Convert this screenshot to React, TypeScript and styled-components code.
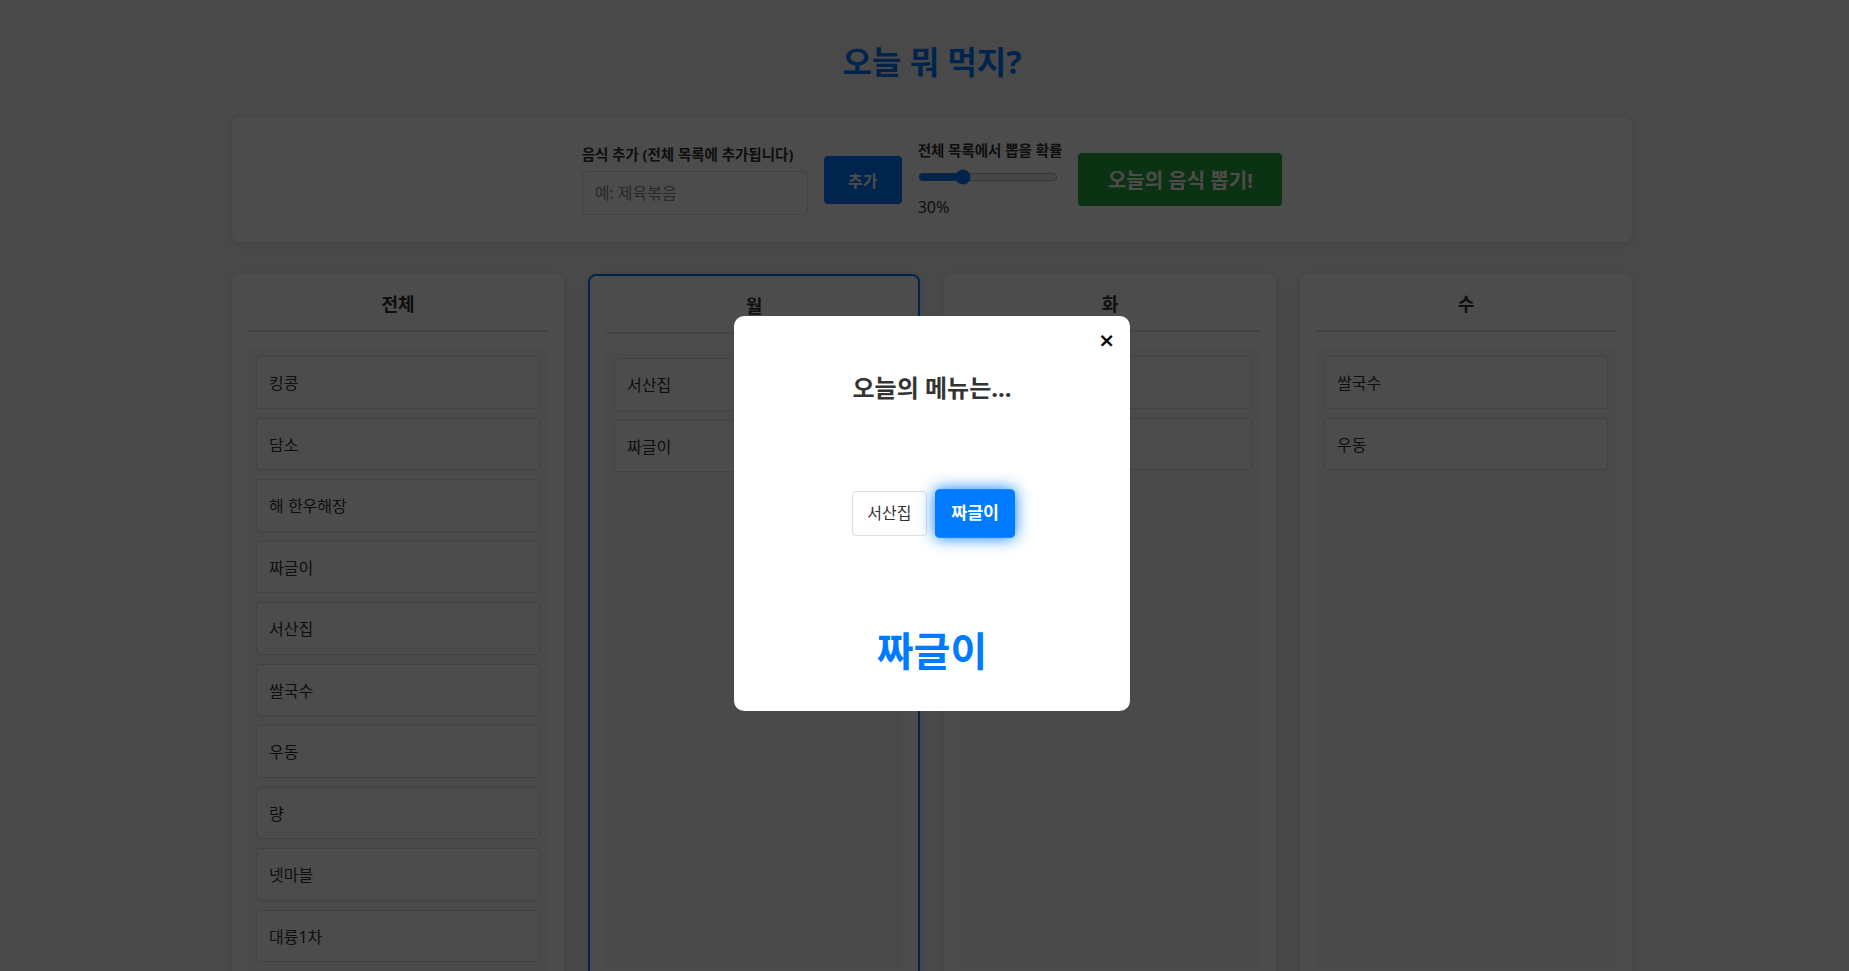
import React from "react";
import styled, { createGlobalStyle } from "styled-components";

type DayColumn = {
  title: string;
  foods: string[];
  active?: boolean;
};

const GlobalStyle = createGlobalStyle`
  * {
    box-sizing: border-box;
  }
  body {
    margin: 0;
    background: #f4f4f4;
    color: #333;
    font-family: "Noto Sans", "Noto Sans CJK KR", sans-serif;
  }
`;

const Page = styled.div`
  position: relative;
  min-height: 100vh;
  padding: 0 0 32px 15px;
`;

const PageTitle = styled.h1`
  margin: 0;
  padding: 38px 0 31px;
  text-align: center;
  font-size: 32px;
  line-height: 48px;
  font-weight: 700;
  color: #007bff;
`;

const Container = styled.main`
  max-width: 1400px;
  margin: 0 auto;
`;

// 상단 입력 영역
const ControlPanel = styled.section`
  display: flex;
  align-items: center;
  justify-content: center;
  gap: 16px;
  padding: 23px 24px;
  background: #fff;
  border-radius: 8px;
  box-shadow: 0 2px 10px rgba(0, 0, 0, 0.1);
`;

const Field = styled.div`
  display: flex;
  flex-direction: column;
`;

const FieldLabel = styled.label`
  font-size: 14.5px;
  line-height: 21px;
  font-weight: 700;
  color: #333;
  margin-bottom: 6px;
`;

const TextInput = styled.input`
  width: 226px;
  height: 44px;
  padding: 10px 12px;
  border: 1px solid #ddd;
  border-radius: 4px;
  font-family: inherit;
  font-size: 16px;
  color: #333;

  &::placeholder {
    color: #888;
  }
`;

const AddButton = styled.button`
  width: 78px;
  height: 48px;
  border: none;
  border-radius: 4px;
  background: #007bff;
  color: #fff;
  font-family: inherit;
  font-size: 16px;
  font-weight: 700;
`;

const RangeInput = styled.input`
  width: 140px;
  margin: 2px 0;
  accent-color: #007bff;
`;

const RangeValue = styled.span`
  margin-top: 8px;
  font-size: 16px;
  line-height: 24px;
  color: #333;
`;

const DrawButton = styled.button`
  width: 204px;
  height: 53px;
  border: none;
  border-radius: 4px;
  background: #28a745;
  color: #fff;
  font-family: inherit;
  font-size: 20px;
  font-weight: 700;
`;

// 요일별 목록
const Board = styled.section`
  display: grid;
  grid-template-columns: repeat(4, 1fr);
  gap: 24px;
  margin-top: 32px;
`;

const Column = styled.div<{ $active?: boolean }>`
  padding: 16px;
  background: #fff;
  border-radius: 8px;
  border: ${({ $active }) => ($active ? "2px solid #007bff" : "none")};
  box-shadow: 0 2px 10px rgba(0, 0, 0, 0.1);
`;

const ColumnTitle = styled.h3`
  margin: 0;
  padding-bottom: 12px;
  border-bottom: 2px solid #e2e2e2;
  text-align: center;
  font-size: 18px;
  line-height: 28px;
  font-weight: 700;
  color: #333;
`;

const FoodList = styled.ul`
  list-style: none;
  margin: 16px 0 0;
  padding: 8px;
  min-height: 620px;
  background: #f9f9f9;
  border-radius: 4px;
`;

const FoodItem = styled.li`
  height: 52.5px;
  margin-bottom: 9px;
  padding: 0 12px;
  display: flex;
  align-items: center;
  background: #fff;
  border: 1px solid #ddd;
  border-radius: 4px;
  font-size: 16px;
  color: #333;
`;

// 결과 모달 (페이지 전체를 덮음)
const Overlay = styled.div`
  position: absolute;
  inset: 0;
  padding-left: 15px;
  display: flex;
  align-items: center;
  justify-content: center;
  background: rgba(0, 0, 0, 0.7);
`;

const Modal = styled.div`
  position: relative;
  width: 396px;
  padding: 54px 30px 30px;
  display: flex;
  flex-direction: column;
  align-items: center;
  background: #fff;
  border-radius: 10px;
`;

const CloseButton = styled.button`
  position: absolute;
  top: 10px;
  right: 9px;
  padding: 0 6px;
  border: none;
  background: none;
  font-family: "DejaVu Sans", sans-serif;
  font-size: 20px;
  line-height: 28px;
  font-weight: 700;
  color: #000;
`;

const ModalTitle = styled.h2`
  margin: 0;
  font-size: 24px;
  line-height: 36px;
  font-weight: 700;
  color: #333;
`;

const SlotRow = styled.div`
  display: flex;
  align-items: center;
  gap: 8px;
  margin: 85px 0;
`;

const SlotChip = styled.span<{ $selected?: boolean }>`
  padding: 10px 14px;
  font-size: 16px;
  line-height: 23px;
  border-radius: 4px;
  border: 1px solid ${({ $selected }) => ($selected ? "#007bff" : "#ddd")};
  background: ${({ $selected }) => ($selected ? "#007bff" : "#fff")};
  color: ${({ $selected }) => ($selected ? "#fff" : "#333")};
  font-weight: ${({ $selected }) => ($selected ? 700 : 400)};
  box-shadow: ${({ $selected }) => ($selected ? "0 0 15px #007bff" : "none")};
  transform: ${({ $selected }) => ($selected ? "scale(1.08)" : "none")};
  margin-left: ${({ $selected }) => ($selected ? "3px" : "0")};
`;

const Result = styled.div`
  font-size: 40px;
  line-height: 60px;
  font-weight: 700;
  color: #007bff;
`;

function App() {
  const columns: DayColumn[] = [
    {
      title: "전체",
      foods: [
        "킹콩",
        "담소",
        "해 한우해장",
        "짜글이",
        "서산집",
        "쌀국수",
        "우동",
        "량",
        "넷마블",
        "대륭1차",
      ],
    },
    { title: "월", foods: ["서산집", "짜글이"], active: true },
    { title: "화", foods: ["담소", "킹콩"] },
    { title: "수", foods: ["쌀국수", "우동"] },
  ];
  const candidates = ["서산집", "짜글이"];
  const picked = "짜글이";

  return (
    <>
      <GlobalStyle />
      <Page>
        <PageTitle>오늘 뭐 먹지?</PageTitle>
        <Container>
          <ControlPanel>
            <Field>
              <FieldLabel>음식 추가 (전체 목록에 추가됩니다)</FieldLabel>
              <TextInput placeholder="예: 제육볶음" />
            </Field>
            <AddButton>추가</AddButton>
            <Field>
              <FieldLabel>전체 목록에서 뽑을 확률</FieldLabel>
              <RangeInput type="range" min={0} max={100} defaultValue={30} />
              <RangeValue>30%</RangeValue>
            </Field>
            <DrawButton>오늘의 음식 뽑기!</DrawButton>
          </ControlPanel>

          <Board>
            {columns.map((col) => (
              <Column key={col.title} $active={col.active}>
                <ColumnTitle>{col.title}</ColumnTitle>
                <FoodList>
                  {col.foods.map((food) => (
                    <FoodItem key={food}>{food}</FoodItem>
                  ))}
                </FoodList>
              </Column>
            ))}
          </Board>
        </Container>

        <Overlay>
          <Modal>
            <CloseButton>×</CloseButton>
            <ModalTitle>오늘의 메뉴는...</ModalTitle>
            <SlotRow>
              {candidates.map((name) => (
                <SlotChip key={name} $selected={name === picked}>
                  {name}
                </SlotChip>
              ))}
            </SlotRow>
            <Result>{picked}</Result>
          </Modal>
        </Overlay>
      </Page>
    </>
  );
}

export default App;
